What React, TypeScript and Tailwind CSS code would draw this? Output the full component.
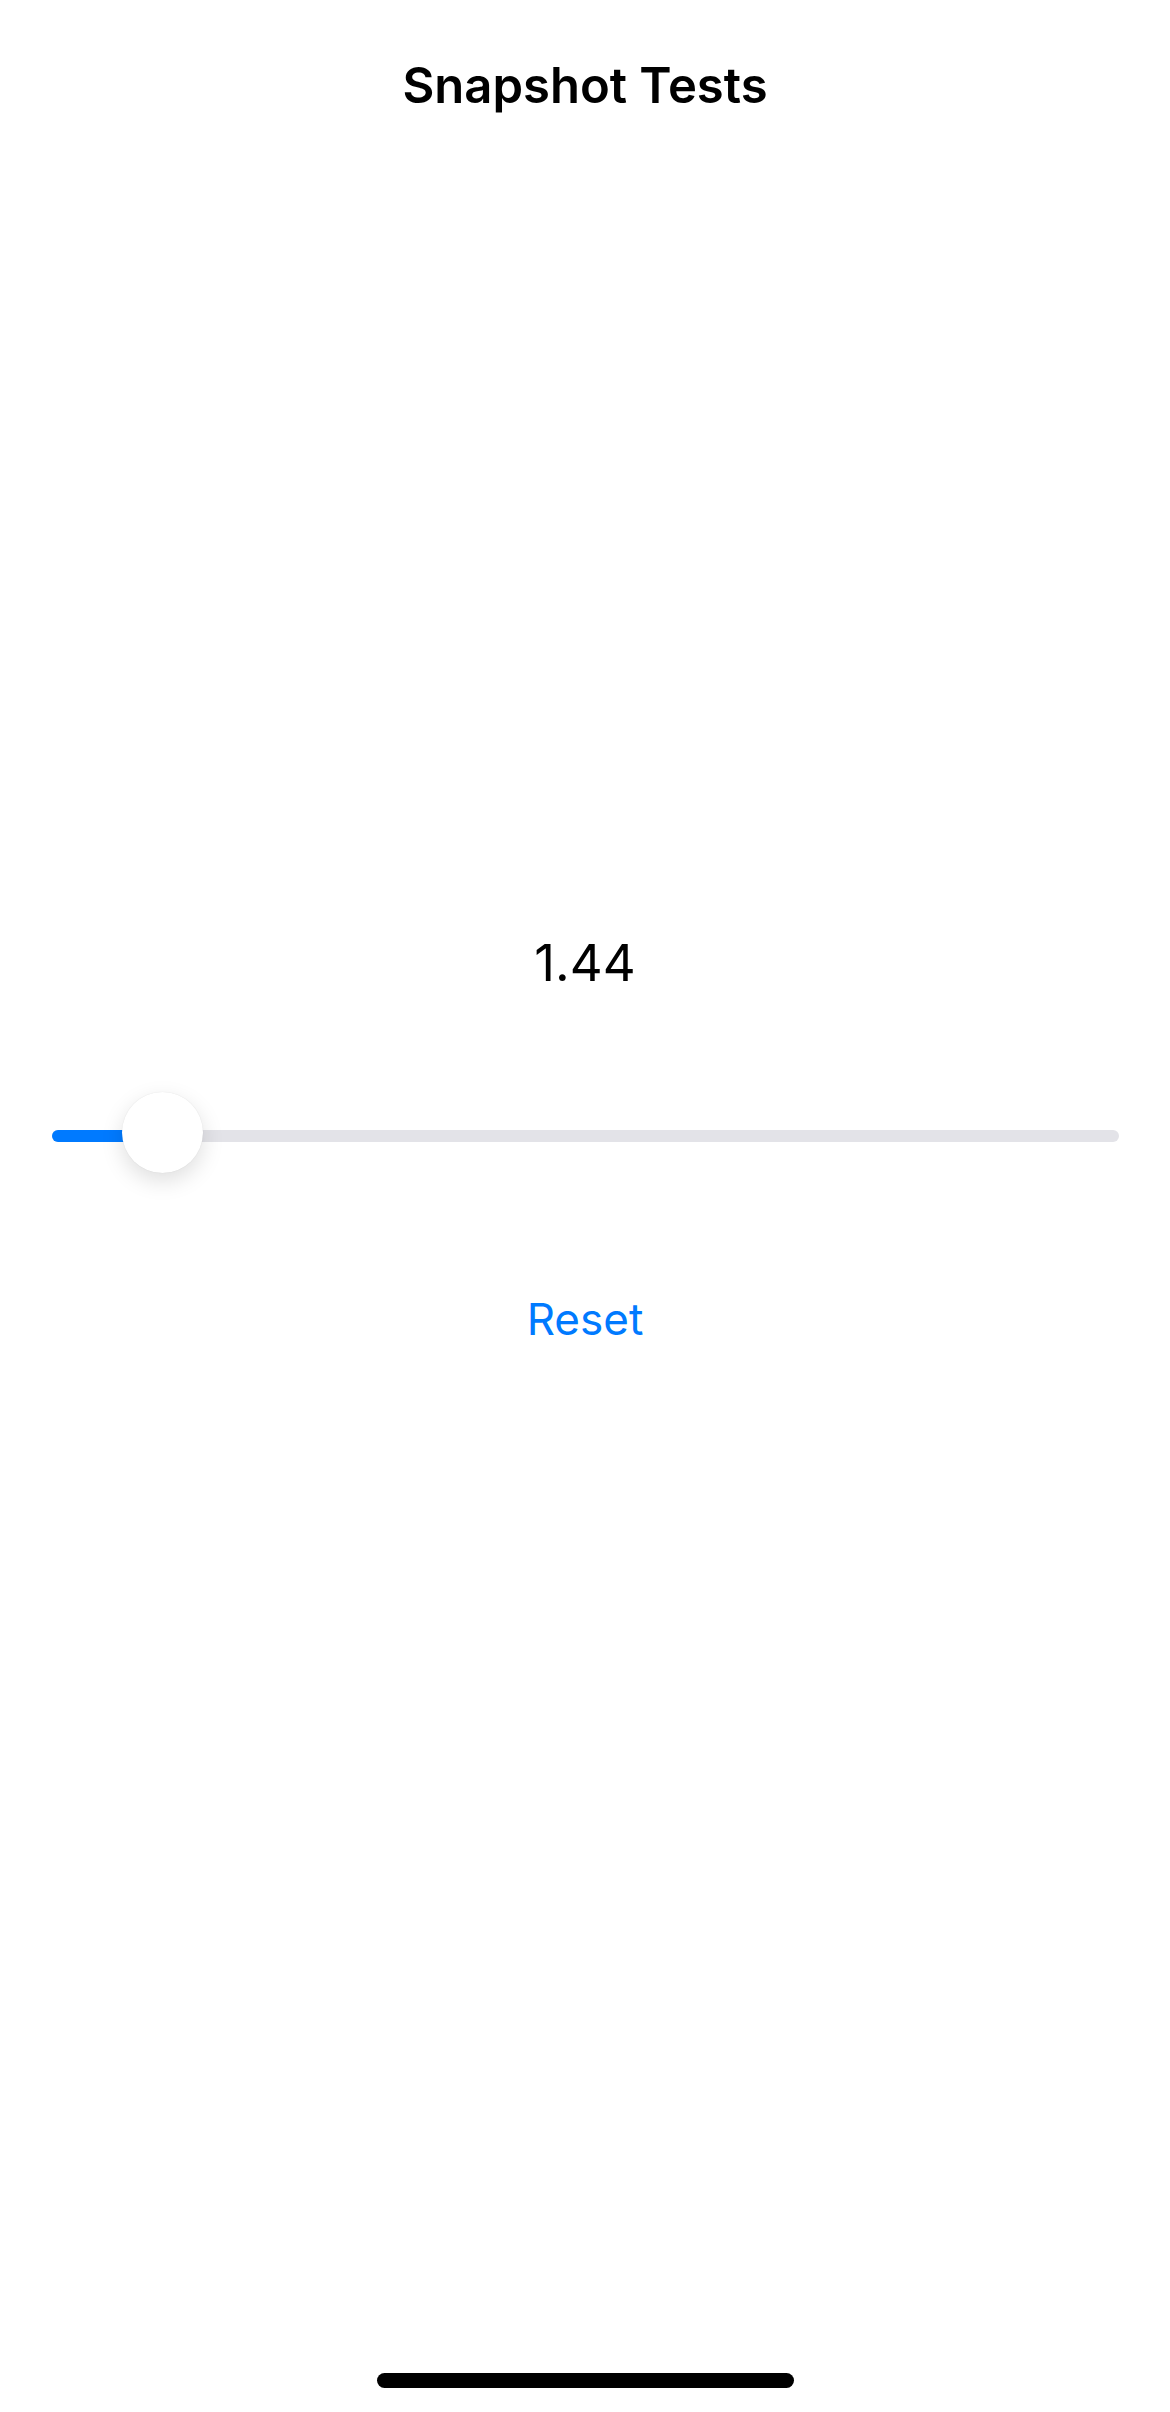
import React from "react";

const App: React.FC = () => {
  const value = 1.44;

  return (
    <div
      className="flex min-h-[2412px] w-[1170px] flex-col items-center bg-white"
      style={{ fontFamily: "Inter, 'Noto Sans', sans-serif" }}
    >
      {/* Nav title */}
      <h1 className="pt-[61px] text-[49px] font-semibold leading-none text-black">
        Snapshot Tests
      </h1>

      {/* Current value */}
      <div className="mt-[827px] text-[51px] leading-none text-black">
        {value.toFixed(2)}
      </div>

      {/* Slider */}
      <div className="relative mt-[104px] h-[81px] w-[1067px]">
        <div className="relative mt-[38px] h-3 w-full rounded-full bg-[#e3e3e8]">
          <div className="absolute left-0 top-0 h-3 w-[110px] rounded-full bg-[#007aff]" />
        </div>
        <div className="absolute left-[70px] top-0 size-[81px] rounded-full bg-white shadow-[0_8px_22px_rgba(0,0,0,0.13),0_0_1px_rgba(0,0,0,0.12)]" />
      </div>

      {/* Reset button */}
      <button className="mt-[124px] text-[44px] leading-none text-[#007aff]">
        Reset
      </button>

      {/* Home indicator */}
      <div className="mb-[24px] mt-auto h-[15px] w-[417px] rounded-full bg-black" />
    </div>
  );
};

export default App;
